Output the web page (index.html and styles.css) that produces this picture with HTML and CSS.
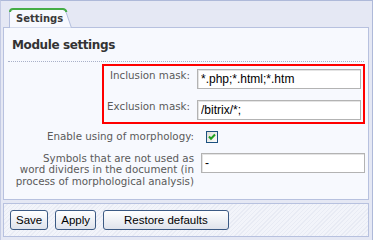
FILE: index.html
```html
<!DOCTYPE html>
<html lang="en">
<head>
    <meta charset="UTF-8">
    <title>Settings</title>
    <link rel="stylesheet" href="styles.css">
</head>
<body>
    <div class="frame">
        <div class="tabs">
            <div class="tab">
                <svg class="tab-shape" width="63" height="20" viewBox="0 0 63 20">
                    <path d="M0.5,20 V4 Q0.5,1.5 3.5,1.5 H54 Q56,1.5 57,4 L62.5,20 Z" fill="#f7f9fe" stroke="#b3bedd"/>
                    <path d="M1,4 Q1,1 4,1 H54 Q56.5,1 57.5,4" fill="none" stroke="#45ad45" stroke-width="2"/>
                </svg>
                <span class="tab-label">Settings</span>
            </div>
        </div>

        <div class="panel">
            <div class="section-title">Module settings</div>

            <div class="form">
                <div class="highlight">
                    <div class="row">
                        <label for="inc">Inclusion mask:</label>
                        <input type="text" id="inc" value="*.php;*.html;*.htm">
                    </div>
                    <div class="row">
                        <label for="exc">Exclusion mask:</label>
                        <input type="text" id="exc" value="/bitrix/*;">
                    </div>
                </div>

                <div class="row row-check">
                    <label>Enable using of morphology:</label>
                    <span class="checkbox">
                        <svg width="12" height="12" viewBox="0 0 12 12">
                            <defs>
                                <linearGradient id="cb" x1="0" y1="0" x2="1" y2="1">
                                    <stop offset="0" stop-color="#dcdcd4"/>
                                    <stop offset="1" stop-color="#ffffff"/>
                                </linearGradient>
                            </defs>
                            <rect x="0.5" y="0.5" width="11" height="11" fill="url(#cb)" stroke="#1c5180"/>
                            <path d="M3,5.5 L5,7.8 L9,3.5" fill="none" stroke="#21a121" stroke-width="2"/>
                        </svg>
                    </span>
                </div>

                <div class="row row-symbols">
                    <label for="sym">Symbols that are not used as<br>word dividers in the document (in<br>process of morphological analysis)</label>
                    <input type="text" id="sym" value="-">
                </div>
            </div>
        </div>

        <div class="footer">
            <button class="btn">Save</button>
            <button class="btn">Apply</button>
            <button class="btn btn-wide">Restore defaults</button>
        </div>
    </div>
</body>
</html>
```

FILE: styles.css
```css
:root {
    --frame-bg: #e5e8f4;
    --frame-border: #aeb9d9;
    --panel-bg: #f7f9fe;
    --panel-border: #b7c1df;
    --label: #5a5a5a;
    --title: #333333;
}
body {
    margin: 0;
    font-family: 'DejaVu Sans', sans-serif;
}
.frame {
    width: 373px;
    height: 240px;
    box-sizing: border-box;
    background: var(--frame-bg);
    border-top: 1px solid var(--frame-border);
    border-left: 1px solid #c4cbe4;
    border-right: 1px solid var(--frame-border);
}
.tabs {
    display: flex;
    padding: 7px 0 0 8px;
}
.tab {
    position: relative;
    z-index: 1;
    width: 63px;
    height: 20px;
    margin-bottom: -1px;
}
.tab-shape {
    position: absolute;
    left: 0;
    top: 0;
}
.tab-label {
    position: relative;
    display: block;
    padding: 4px 0 0 7px;
    font-size: 10px;
    line-height: 13px;
    font-weight: bold;
    color: #3a3a3a;
}
.panel {
    position: relative;
    height: 173px;
    box-sizing: border-box;
    margin: 0 3px 0 2px;
    padding-top: 9px;
    background: var(--panel-bg);
    border: 1px solid var(--panel-border);
}
.section-title {
    margin: 0 4px;
    padding: 0 4px 8px;
    border-bottom: 1px dotted #a9b1c9;
    font-size: 12px;
    line-height: 16px;
    font-weight: bold;
    letter-spacing: -0.4px;
    color: var(--title);
}
.form {
    padding: 2px 3px 0 4px;
}
.highlight {
    margin-left: 94px;
    padding: 3px 2px 2px 0;
    border: 2px solid #ff0000;
    display: flex;
    flex-direction: column;
    gap: 11px;
}
.row {
    display: grid;
    grid-template-columns: 1fr 164px;
    column-gap: 7px;
    align-items: start;
}
.row label {
    text-align: right;
    font-size: 10.3px;
    line-height: 13px;
    color: var(--label);
    white-space: nowrap;
}
.row input {
    width: 164px;
    height: 20px;
    box-sizing: border-box;
    margin: 0;
    padding: 0 3px;
    border: 1px solid #b3b3b3;
    box-shadow: inset 1px 1px 0 #e4e4e4;
    background: #ffffff;
    font-family: 'Liberation Sans', Arial, sans-serif;
    font-size: 12px;
    color: #000000;
}
.row-check {
    margin-top: 6px;
}
.checkbox {
    display: block;
    height: 12px;
    margin: 1px 0 0 5px;
}
.checkbox svg {
    display: block;
}
.row-symbols {
    margin-top: 9px;
}
.row-symbols label {
    line-height: 11.5px;
    padding-top: 0.5px;
}
.row-symbols input {
    margin-top: 1px;
}
.footer {
    height: 34px;
    box-sizing: border-box;
    margin: 3px 3px 0 2px;
    padding: 6px;
    display: flex;
    gap: 7px;
    border: 1px solid var(--panel-border);
    background: repeating-linear-gradient(135deg, #f2f4fa 0, #f2f4fa 2px, #e8ebf4 2px, #e8ebf4 3px);
}
.btn {
    height: 20px;
    margin: 0;
    padding: 0 5px;
    border: 1px solid #3c5a84;
    border-radius: 3px;
    background: linear-gradient(#ffffff, #dfe3ec);
    font-family: 'Liberation Sans', Arial, sans-serif;
    font-size: 11.5px;
    color: #000000;
}
.btn-wide {
    padding: 0 20px;
}
```
